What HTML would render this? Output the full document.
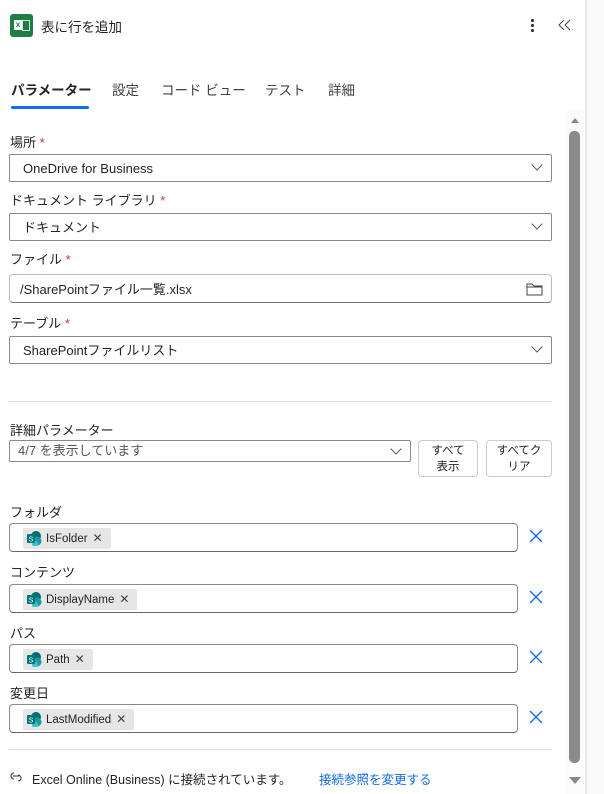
<!DOCTYPE html>
<html><head><meta charset="utf-8"><style>
*{box-sizing:border-box;margin:0;padding:0}
body{width:604px;height:794px;overflow:hidden;background:#fff;font-family:"Liberation Sans","Noto Sans CJK JP",sans-serif;color:#242424;font-size:13px;position:relative}
.a{position:absolute}
.lbl{position:absolute;left:10px;font-size:13px;color:#242424}
.req{color:#c4314b}
.dd{position:absolute;left:9px;width:543px;height:28px;border:1px solid #8a8a8a;border-radius:2px;padding-left:13px;padding-top:1px;line-height:26px;font-size:13px}
.chev{position:absolute;right:10px;top:6px;width:8px;height:8px;border-right:1px solid #555;border-bottom:1px solid #555;transform:rotate(45deg)}
.tb{position:absolute;left:9px;width:509px;height:29px;border:1px solid #8a8a8a;border-bottom-color:#666;border-radius:4px}
.tok{position:absolute;left:13px;top:4px;height:21px;background:#e6e6e6;border-radius:2px;padding:0 8px 0 23px;line-height:21px;font-size:11.5px}
.tok .ic{position:absolute;left:4px;top:3px;width:15px;height:15px}
.tok .x{margin-left:5px;color:#444;font-size:12px}
.bx{position:absolute;left:529px;width:14px;height:14px}
.tabs span{position:absolute;top:79px;font-size:13.5px;color:#424242}
</style></head><body>
<div class="a" style="left:10px;top:14px;width:23px;height:23px;background:#1e7e45;border-radius:3px"></div>
<div class="a" style="left:14px;top:20px;width:8px;height:10px;background:#fff;color:#1e7e45;font-size:8px;font-weight:bold;line-height:10px;text-align:center">x</div>
<div class="a" style="left:22px;top:20px;width:8px;height:11px;border:1px solid #cfe8d8"></div>
<div class="a" style="left:41px;top:16px;font-size:13.5px">表に行を追加</div>
<div class="a" style="left:531px;top:19px;width:2.5px;height:2.5px;background:#333;border-radius:50%;box-shadow:0 5px 0 #333,0 10px 0 #333"></div>
<svg class="a" style="left:558px;top:19px" width="14" height="12"><path d="M6 1L1 6L6 11M12 1L7 6L12 11" fill="none" stroke="#444" stroke-width="1"/></svg>
<div class="tabs">
<span style="left:11px;font-weight:bold;color:#242424">パラメーター</span>
<span style="left:112px">設定</span>
<span style="left:161px">コード ビュー</span>
<span style="left:265px">テスト</span>
<span style="left:328px">詳細</span>
</div>
<div class="a" style="left:11px;top:106px;width:78px;height:3px;background:#0f6cf5;border-radius:2px"></div>

<div class="lbl" style="top:132px">場所 <span class="req">*</span></div>
<div class="dd" style="top:154px">OneDrive for Business<div class="chev"></div></div>
<div class="lbl" style="top:190px">ドキュメント ライブラリ <span class="req">*</span></div>
<div class="dd" style="top:213px">ドキュメント<div class="chev"></div></div>
<div class="lbl" style="top:249px">ファイル <span class="req">*</span></div>
<div class="dd" style="top:274px;height:29px;border-color:#bbb;border-bottom-color:#777;border-radius:4px;padding-left:10px;line-height:27px">/SharePointファイル一覧.xlsx
<svg class="a" style="right:8px;top:7px" width="17" height="14"><path d="M1 2h5l2 2h8v9H1z M1 5h15" fill="none" stroke="#444" stroke-width="1"/></svg></div>
<div class="lbl" style="top:313px">テーブル <span class="req">*</span></div>
<div class="dd" style="top:336px">SharePointファイルリスト<div class="chev"></div></div>

<div class="a" style="left:9px;top:401px;width:543px;height:1px;background:#ddd"></div>
<div class="lbl" style="top:420px">詳細パラメーター</div>
<div class="dd" style="top:440px;width:402px;height:22px;line-height:20px;padding-top:0;padding-left:8px;color:#555">4/7 を表示しています<div class="chev" style="top:4px"></div></div>
<div class="a" style="left:418px;top:440px;width:60px;height:37px;border:1px solid #ccc;border-radius:4px;font-size:11.5px;text-align:center;line-height:16px;padding-top:2px">すべて<br>表示</div>
<div class="a" style="left:486px;top:440px;width:66px;height:37px;border:1px solid #ccc;border-radius:4px;font-size:11.5px;text-align:center;line-height:16px;padding-top:2px">すべてク<br>リア</div>

<svg width="0" height="0" style="position:absolute"><defs><g id="sp"><circle cx="9" cy="5" r="5" fill="#036c70"/><circle cx="10" cy="10" r="4.5" fill="#1a9ba1"/><circle cx="8" cy="13" r="3" fill="#37c6d0"/><rect x="0" y="3" width="8" height="9" rx="1" fill="#03787c"/><text x="4" y="10.5" font-size="7" fill="#fff" text-anchor="middle" font-family="Liberation Sans">S</text></g></defs></svg>

<div class="lbl" style="top:502px">フォルダ</div>
<div class="tb" style="top:523px"><div class="tok"><svg class="ic"><use href="#sp"/></svg>IsFolder<span class="x">✕</span></div></div>
<svg class="bx" style="top:529px"><path d="M1 1L13 13M13 1L1 13" stroke="#0f6cf5" stroke-width="1.3"/></svg>
<div class="lbl" style="top:562px">コンテンツ</div>
<div class="tb" style="top:584px"><div class="tok"><svg class="ic"><use href="#sp"/></svg>DisplayName<span class="x">✕</span></div></div>
<svg class="bx" style="top:590px"><path d="M1 1L13 13M13 1L1 13" stroke="#0f6cf5" stroke-width="1.3"/></svg>
<div class="lbl" style="top:623px">パス</div>
<div class="tb" style="top:644px"><div class="tok"><svg class="ic"><use href="#sp"/></svg>Path<span class="x">✕</span></div></div>
<svg class="bx" style="top:650px"><path d="M1 1L13 13M13 1L1 13" stroke="#0f6cf5" stroke-width="1.3"/></svg>
<div class="lbl" style="top:683px">変更日</div>
<div class="tb" style="top:704px"><div class="tok"><svg class="ic"><use href="#sp"/></svg>LastModified<span class="x">✕</span></div></div>
<svg class="bx" style="top:710px"><path d="M1 1L13 13M13 1L1 13" stroke="#0f6cf5" stroke-width="1.3"/></svg>

<div class="a" style="left:9px;top:749px;width:543px;height:1px;background:#ddd"></div>
<svg class="a" style="left:9px;top:770px" width="14" height="14"><path d="M5 3a3 3 0 1 0 0 6M9 5a3 3 0 1 1 0 6M4 6h6" fill="none" stroke="#333" stroke-width="1.1"/></svg>
<div class="a" style="left:32px;top:769px;font-size:12.5px">Excel Online (Business) に接続されています。</div>
<div class="a" style="left:319px;top:769px;font-size:12.5px;color:#0f6cf5">接続参照を変更する</div>

<div class="a" style="left:566px;top:110px;width:18px;height:684px;background:#fbfbfb"></div>
<div class="a" style="left:569px;top:131px;width:11px;height:632px;background:#8a8a8a;border-radius:5px"></div>
<div class="a" style="left:571px;top:118px;width:0;height:0;border-left:4px solid transparent;border-right:4px solid transparent;border-bottom:5px solid #888"></div>
<div class="a" style="left:569px;top:777px;width:0;height:0;border-left:6px solid transparent;border-right:6px solid transparent;border-top:7px solid #888"></div>
<div class="a" style="left:585px;top:0;width:19px;height:794px;background:#fafafa;border-left:2px solid #e6e6e6"></div>
</body></html>
